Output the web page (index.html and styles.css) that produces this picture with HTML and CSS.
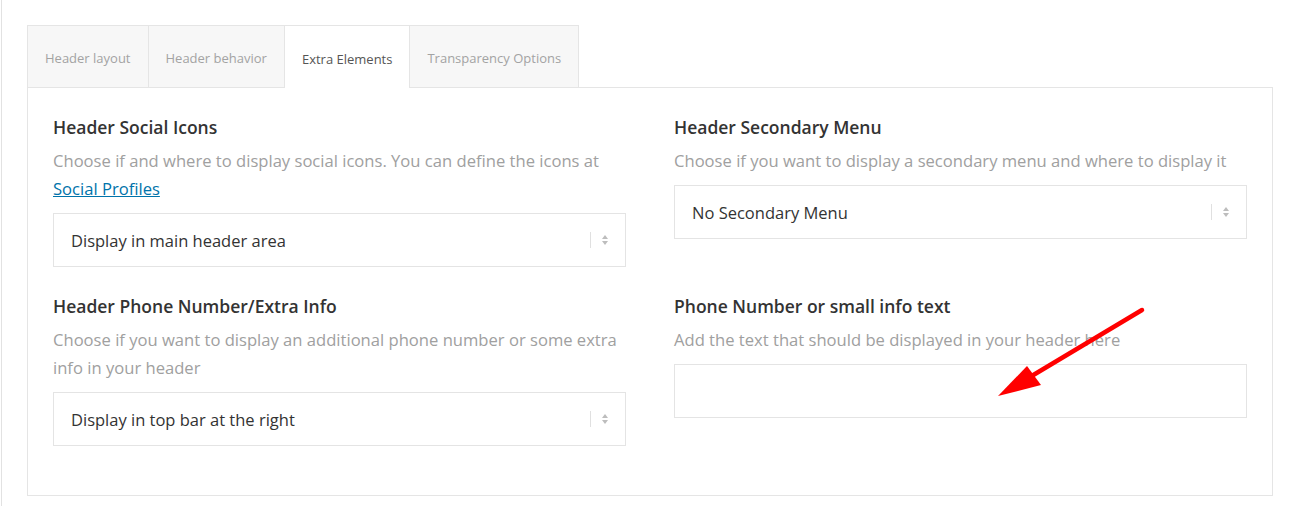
FILE: index.html
```html
<!DOCTYPE html>
<html>
<head>
<meta charset="utf-8">
<link rel="stylesheet" href="styles.css">
</head>
<body>
<div class="page">
  <div class="tabs">
    <div class="tab">Header layout</div>
    <div class="tab">Header behavior</div>
    <div class="tab active">Extra Elements</div>
    <div class="tab">Transparency Options</div>
  </div>
  <div class="panel">
    <div class="field">
      <div class="label">Header Social Icons</div>
      <div class="desc">Choose if and where to display social icons. You can define the icons at <a href="#" class="link">Social Profiles</a></div>
      <div class="select"><span>Display in main header area</span><span class="arrows"><span class="bar"></span><svg width="8" height="12" viewBox="0 0 8 12"><path d="M4 1 L7 5 L1 5 Z M4 11 L7 7 L1 7 Z" fill="#bdbdbd"/></svg></span></div>
    </div>
    <div class="field">
      <div class="label">Header Secondary Menu</div>
      <div class="desc">Choose if you want to display a secondary menu and where to display it</div>
      <div class="select"><span>No Secondary Menu</span><span class="arrows"><span class="bar"></span><svg width="8" height="12" viewBox="0 0 8 12"><path d="M4 1 L7 5 L1 5 Z M4 11 L7 7 L1 7 Z" fill="#bdbdbd"/></svg></span></div>
    </div>
    <div class="field">
      <div class="label">Header Phone Number/Extra Info</div>
      <div class="desc">Choose if you want to display an additional phone number or some extra info in your header</div>
      <div class="select"><span>Display in top bar at the right</span><span class="arrows"><span class="bar"></span><svg width="8" height="12" viewBox="0 0 8 12"><path d="M4 1 L7 5 L1 5 Z M4 11 L7 7 L1 7 Z" fill="#bdbdbd"/></svg></span></div>
    </div>
    <div class="field">
      <div class="label">Phone Number or small info text</div>
      <div class="desc">Add the text that should be displayed in your header here</div>
      <div class="input"></div>
    </div>
  </div>
  <svg class="annot" width="1295" height="506" viewBox="0 0 1295 506">
    <line x1="1142" y1="310" x2="1030" y2="377" stroke="#ff0000" stroke-width="4.5" stroke-linecap="round"/>
    <path d="M998 396 L1027 366 L1041 385 Z" fill="#ff0000"/>
  </svg>
</div>
</body>
</html>
```

FILE: styles.css
```css
html, body {
  margin: 0;
  padding: 0;
  background: #ffffff;
}
body {
  font-family: "Open Sans", "Noto Sans", sans-serif;
}
.page {
  position: relative;
  margin-left: 1px;
  border-left: 1px solid #e2e2e2;
  height: 506px;
  box-sizing: border-box;
  padding: 25px 0 0 25px;
}
.tabs {
  display: flex;
  height: 62px;
  position: relative;
  z-index: 1;
}
.tab {
  display: flex;
  align-items: center;
  justify-content: center;
  box-sizing: border-box;
  background: #f7f7f7;
  border: 1px solid #e5e5e5;
  border-bottom: none;
  margin-right: -1px;
  padding: 3px 17px 0 17px;
  font-size: 13px;
  color: #a3a3a3;
}
.tab.active {
  background: #ffffff;
  color: #555555;
  height: 63px;
}
.panel {
  width: 1246px;
  box-sizing: border-box;
  border: 1px solid #e5e5e5;
  padding: 27px 25px 49px 25px;
  display: grid;
  grid-template-columns: 573px 573px;
  column-gap: 48px;
  row-gap: 27px;
}
.label {
  font-size: 17.5px;
  font-weight: 600;
  color: #333333;
  line-height: 24px;
}
.desc {
  margin-top: 8px;
  font-size: 16.6px;
  line-height: 28px;
  color: #a0a0a0;
}
.link {
  color: #0073aa;
  text-decoration: underline;
}
.select {
  margin-top: 10px;
  height: 54px;
  box-sizing: border-box;
  border: 1px solid #e4e4e4;
  display: flex;
  align-items: center;
  justify-content: space-between;
  padding: 0 16px 0 17px;
  font-size: 16.5px;
  color: #333333;
}
.arrows {
  display: flex;
  align-items: center;
  gap: 10px;
}
.bar {
  width: 1px;
  height: 16px;
  background: #e0e0e0;
}
.input {
  margin-top: 10px;
  height: 54px;
  box-sizing: border-box;
  border: 1px solid #e4e4e4;
}
.annot {
  position: absolute;
  left: -2px;
  top: 0;
  pointer-events: none;
}
```
